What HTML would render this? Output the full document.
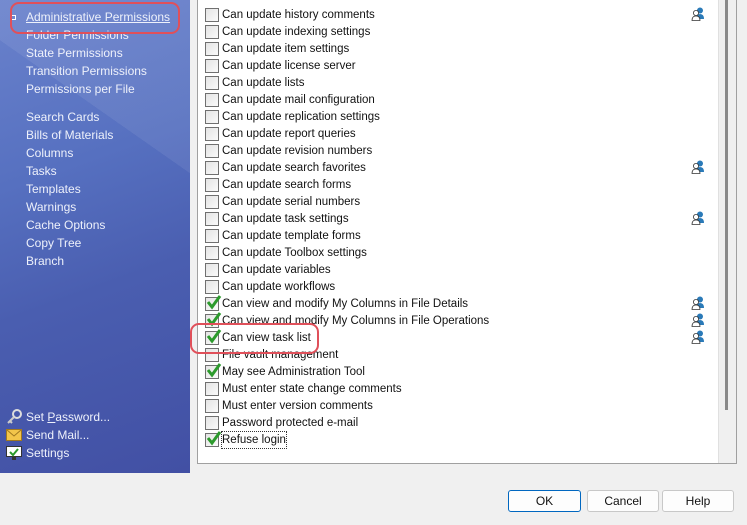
<!DOCTYPE html>
<html><head><style>
*{margin:0;padding:0;box-sizing:border-box}
body{width:747px;height:525px;background:#f0f0f0;position:relative;overflow:hidden;font-family:"Liberation Sans",sans-serif;font-size:11.5px}
#left{position:absolute;left:0;top:0;width:190px;height:473px;background:linear-gradient(160deg,#6a82cc 0%,#5670c0 35%,#4a5eb0 60%,#4250a4 100%)}
#left .diag{position:absolute;left:0;top:0;width:190px;height:300px;background:linear-gradient(215deg,rgba(255,255,255,0.07) 0 40%,rgba(255,255,255,0) 40%)}
.nav{position:absolute;left:26px;color:#eef1fb;font-size:12px;line-height:14px;white-space:nowrap}
#list{position:absolute;left:197px;top:0;width:540px;height:464px;background:#fff;border:1px solid #a0a0a0;border-top:none}
#sb{position:absolute;right:0;top:0;width:18px;height:100%;background:#f0f0f0;border-left:1px solid #e0e0e0}
#sb div{position:absolute;left:6px;top:0;width:3px;height:410px;background:#8a8a8a}
.row{position:absolute;left:7px;height:16px;white-space:nowrap;color:#111;line-height:16px}
.cb{position:absolute;left:0;top:1px;width:14px;height:14px;border:1px solid #707070;background:linear-gradient(135deg,#e4e4e4,#fafafa)}
.row span{position:absolute;left:17px;top:0}
.ck{position:absolute;left:1px;top:-2px}
.usr{position:absolute;left:486px;top:0}
.btn{position:absolute;top:490px;height:22px;background:#fdfdfd;border:1px solid #c8c8c8;border-radius:3px;text-align:center;line-height:20px;font-size:12px;color:#111}
.hl{position:absolute;border:2px solid #e0505a;border-radius:9px}
</style></head><body>
<div id="left"><div class="diag"></div>
<div style="position:absolute;left:11px;top:15px;width:5px;height:5px;border:1px solid #fff"></div>
<div class="nav" style="top:10px;text-decoration:underline">Administrative Permissions</div>
<div class="nav" style="top:28px">Folder Permissions</div>
<div class="nav" style="top:46px">State Permissions</div>
<div class="nav" style="top:64px">Transition Permissions</div>
<div class="nav" style="top:82px">Permissions per File</div>
<div class="nav" style="top:110px">Search Cards</div>
<div class="nav" style="top:128px">Bills of Materials</div>
<div class="nav" style="top:146px">Columns</div>
<div class="nav" style="top:164px">Tasks</div>
<div class="nav" style="top:182px">Templates</div>
<div class="nav" style="top:200px">Warnings</div>
<div class="nav" style="top:218px">Cache Options</div>
<div class="nav" style="top:236px">Copy Tree</div>
<div class="nav" style="top:254px">Branch</div>
<svg style="position:absolute;left:6px;top:409px" width="16" height="16"><circle cx="11" cy="5" r="4" fill="none" stroke="#ddd" stroke-width="2"/><path d="M8 8 L2 14 M4 12 L6 14" stroke="#ccc" stroke-width="2"/></svg>
<div class="nav" style="top:410px">Set <u>P</u>assword...</div>
<svg style="position:absolute;left:6px;top:429px" width="16" height="12"><rect x="0.5" y="0.5" width="15" height="11" fill="#f3c54a" stroke="#a07820"/><path d="M1 1 L8 7 L15 1" fill="none" stroke="#a07820"/></svg>
<div class="nav" style="top:428px">Send Mail...</div>
<svg style="position:absolute;left:6px;top:446px" width="16" height="15"><rect x="0.5" y="0.5" width="15" height="10" fill="#fff" stroke="#333"/><path d="M4 6 L7 9 L12 3" fill="none" stroke="#2a9a2a" stroke-width="2"/><rect x="6" y="11" width="4" height="3" fill="#333"/></svg>
<div class="nav" style="top:446px">Settings</div>
</div>
<div id="list"><div id="sb"><div></div></div>
<div id="rows"></div>
</div>
<div class="hl" style="left:10px;top:2px;width:170px;height:32px"></div>
<div class="hl" style="left:190px;top:323px;width:129px;height:31px"></div>
<div class="btn" style="left:508px;width:73px;border-color:#0067c0;border-width:1px">OK</div>
<div class="btn" style="left:587px;width:72px">Cancel</div>
<div class="btn" style="left:662px;width:72px">Help</div>
<script>
var items=["Can update history comments","Can update indexing settings","Can update item settings","Can update license server","Can update lists","Can update mail configuration","Can update replication settings","Can update report queries","Can update revision numbers","Can update search favorites","Can update search forms","Can update serial numbers","Can update task settings","Can update template forms","Can update Toolbox settings","Can update variables","Can update workflows","Can view and modify My Columns in File Details","Can view and modify My Columns in File Operations","Can view task list","File vault management","May see Administration Tool","Must enter state change comments","Must enter version comments","Password protected e-mail","Refuse login"];
var checked=[17,18,19,21,25],users=[0,9,12,17,18,19];
var h="";
items.forEach(function(t,i){
var y=7+i*17;
h+='<div class="row" style="top:'+y+'px"><div class="cb"></div>';
if(checked.indexOf(i)>=0)h+='<svg class="ck" width="16" height="16"><path d="M2 8 L6 13 L14 2" fill="none" stroke="#2c9a2c" stroke-width="3"/></svg>';
h+='<span'+(i==25?' style="outline:1px dotted #333"':'')+'>'+t+'</span>';
if(users.indexOf(i)>=0)h+='<svg class="usr" width="14" height="14"><circle cx="9" cy="3.5" r="3" fill="#2a7ab8"/><path d="M5 12 Q5 7 9 7 Q13 7 13 12Z" fill="#2a7ab8"/><circle cx="5" cy="6" r="2.6" fill="#fff" stroke="#333" stroke-width=".8"/><path d="M1 13.5 Q1 9 5 9 Q9 9 9 13.5Z" fill="#fff" stroke="#333" stroke-width=".8"/></svg>';
h+='</div>';});
document.getElementById("rows").innerHTML=h;
</script>
</body></html>
